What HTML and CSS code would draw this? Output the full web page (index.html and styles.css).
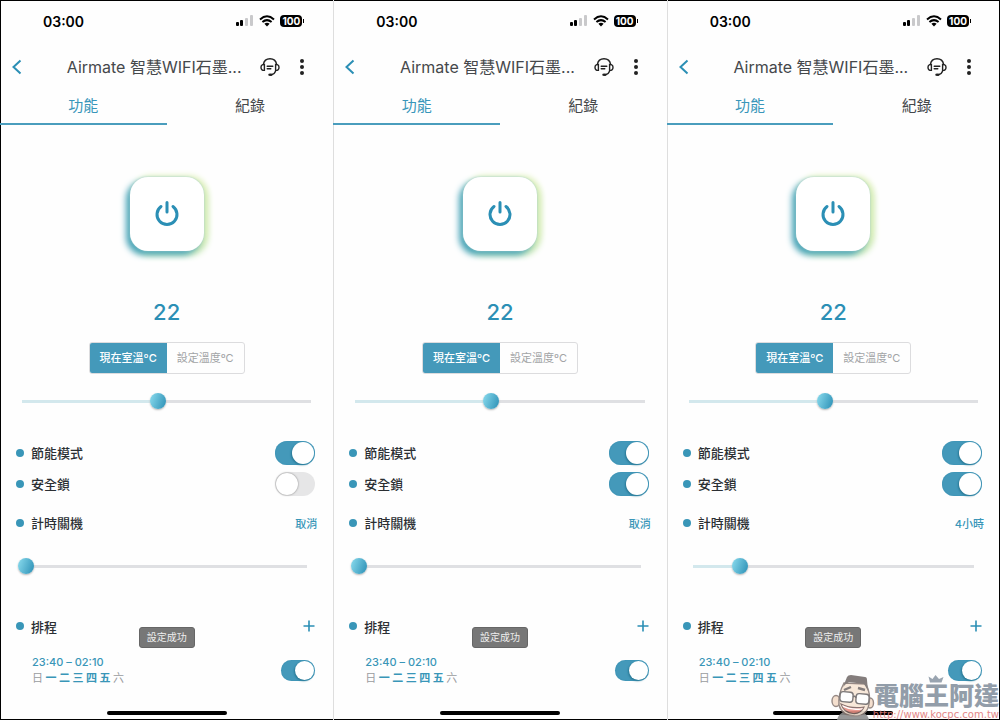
FILE: index.html
```html
<!DOCTYPE html>
<html lang="zh-Hant">
<head>
    <meta charset="UTF-8">
    <meta name="viewport" content="width=device-width, initial-scale=1.0">
    <title>Airmate 智慧WIFI石墨</title>
    <link rel="stylesheet" href="styles.css">
</head>
<body>
    <svg class="sprite" aria-hidden="true">
        <symbol id="signal" viewBox="0 0 18 12">
            <rect x="0" y="7" width="3" height="4" rx="1"/>
            <rect x="4" y="5" width="3" height="6" rx="1"/>
            <rect x="9" y="3" width="3" height="8" rx="1" fill="#c9c9cb"/>
            <rect x="14" y="0" width="3" height="11" rx="1" fill="#c9c9cb"/>
        </symbol>
        <symbol id="wifi" viewBox="0 0 16 12">
            <path d="M1 4.4 Q8 -1.8 15 4.4 M3.4 7 Q8 3.2 12.6 7" fill="none" stroke="#000" stroke-width="2"/>
            <path d="M5.4 8.7 Q8 6.7 10.6 8.7 L8 11.4 Z"/>
        </symbol>
        <symbol id="back" viewBox="0 0 12 16">
            <path d="M9.5 1.5 L2.5 8 L9.5 14.5" fill="none" stroke="#2b8fb5" stroke-width="2"/>
        </symbol>
        <symbol id="headset" viewBox="0 0 20 20">
            <g fill="none" stroke="#222" stroke-width="1.4" stroke-linecap="round">
                <path d="M3.3 7.5 C4 3.6 6.7 1.7 10 1.7 S16 3.6 16.7 7.5"/>
                <path d="M4.4 7.4 V13.4 C2.3 13.4 1 12.4 1 10.4 S2.3 7.4 4.4 7.4 Z M15.6 7.4 V13.4 C17.7 13.4 19 12.4 19 10.4 S17.7 7.4 15.6 7.4 Z"/>
                <path d="M15.8 13.6 C15 16 13.4 17.4 11.4 17.8"/>
                <path d="M7.2 9.2 H12.8 M7.2 11.8 H10.8"/>
            </g>
            <ellipse cx="10.4" cy="17.8" rx="2.2" ry="1.3" fill="#222"/>
        </symbol>
        <symbol id="dots" viewBox="0 0 6 18">
            <g fill="#222">
                <circle cx="3" cy="3" r="2"/>
                <circle cx="3" cy="9" r="2"/>
                <circle cx="3" cy="15" r="2"/>
            </g>
        </symbol>
        <symbol id="power" viewBox="0 0 26 28">
            <path d="M7 6.5 A10 10 0 1 0 19 6.5 M13 2.5 V12" fill="none" stroke="#2b8fb5" stroke-width="3" stroke-linecap="round"/>
        </symbol>
        <symbol id="plus" viewBox="0 0 12 12">
            <path d="M6 0.5 V11.5 M0.5 6 H11.5" stroke="#2b8fb5" stroke-width="1.6"/>
        </symbol>
    </svg>

    <main class="screens">
        <section class="phone">
            <div class="status">
                <span class="clock">03:00</span>
                <span class="status-icons">
                    <svg width="18" height="12"><use href="#signal"/></svg>
                    <svg width="16" height="12"><use href="#wifi"/></svg>
                    <span class="battery">100</span>
                </span>
            </div>
            <header class="topbar">
                <button class="icon-btn" aria-label="返回"><svg width="12" height="16"><use href="#back"/></svg></button>
                <h1 class="title">Airmate 智慧WIFI石墨...</h1>
                <button class="icon-btn" aria-label="客服"><svg width="20" height="20"><use href="#headset"/></svg></button>
                <button class="icon-btn more" aria-label="更多"><svg width="6" height="18"><use href="#dots"/></svg></button>
            </header>
            <nav class="tabs">
                <a class="tab active" href="#">功能</a>
                <a class="tab" href="#">紀錄</a>
            </nav>
            <button class="power-btn" aria-label="電源"><svg width="26" height="28"><use href="#power"/></svg></button>
            <p class="temp">22</p>
            <div class="segment">
                <button class="seg on">現在室溫ºC</button>
                <button class="seg">設定溫度ºC</button>
            </div>
            <input class="range temp-range" type="range" min="0" max="100" value="47" style="--fill: 47%" aria-label="溫度">
            <div class="row">
                <label class="name" for="eco-1">節能模式</label>
                <input class="switch" type="checkbox" id="eco-1" checked>
            </div>
            <div class="row">
                <label class="name" for="lock-1">安全鎖</label>
                <input class="switch" type="checkbox" id="lock-1">
            </div>
            <div class="row timer">
                <label class="name" for="timer-1">計時關機</label>
                <button class="text-btn">取消</button>
            </div>
            <input class="range timer-range" type="range" id="timer-1" min="0" max="24" value="0" style="--fill: 0%">
            <div class="row schedule">
                <h2 class="name">排程</h2>
                <button class="icon-btn" aria-label="新增排程"><svg width="12" height="12"><use href="#plus"/></svg></button>
            </div>
            <div class="plan">
                <label for="plan-1">
                    <span class="time">23:40 – 02:10</span>
                    <span class="days">日 <b>一 二 三 四 五</b> 六</span>
                </label>
                <input class="switch small" type="checkbox" id="plan-1" checked>
            </div>
            <div class="toast">設定成功</div>
            <div class="home-bar"></div>
        </section>

        <section class="phone">
            <div class="status">
                <span class="clock">03:00</span>
                <span class="status-icons">
                    <svg width="18" height="12"><use href="#signal"/></svg>
                    <svg width="16" height="12"><use href="#wifi"/></svg>
                    <span class="battery">100</span>
                </span>
            </div>
            <header class="topbar">
                <button class="icon-btn" aria-label="返回"><svg width="12" height="16"><use href="#back"/></svg></button>
                <h1 class="title">Airmate 智慧WIFI石墨...</h1>
                <button class="icon-btn" aria-label="客服"><svg width="20" height="20"><use href="#headset"/></svg></button>
                <button class="icon-btn more" aria-label="更多"><svg width="6" height="18"><use href="#dots"/></svg></button>
            </header>
            <nav class="tabs">
                <a class="tab active" href="#">功能</a>
                <a class="tab" href="#">紀錄</a>
            </nav>
            <button class="power-btn" aria-label="電源"><svg width="26" height="28"><use href="#power"/></svg></button>
            <p class="temp">22</p>
            <div class="segment">
                <button class="seg on">現在室溫ºC</button>
                <button class="seg">設定溫度ºC</button>
            </div>
            <input class="range temp-range" type="range" min="0" max="100" value="47" style="--fill: 47%" aria-label="溫度">
            <div class="row">
                <label class="name" for="eco-2">節能模式</label>
                <input class="switch" type="checkbox" id="eco-2" checked>
            </div>
            <div class="row">
                <label class="name" for="lock-2">安全鎖</label>
                <input class="switch" type="checkbox" id="lock-2" checked>
            </div>
            <div class="row timer">
                <label class="name" for="timer-2">計時關機</label>
                <button class="text-btn">取消</button>
            </div>
            <input class="range timer-range" type="range" id="timer-2" min="0" max="24" value="0" style="--fill: 0%">
            <div class="row schedule">
                <h2 class="name">排程</h2>
                <button class="icon-btn" aria-label="新增排程"><svg width="12" height="12"><use href="#plus"/></svg></button>
            </div>
            <div class="plan">
                <label for="plan-2">
                    <span class="time">23:40 – 02:10</span>
                    <span class="days">日 <b>一 二 三 四 五</b> 六</span>
                </label>
                <input class="switch small" type="checkbox" id="plan-2" checked>
            </div>
            <div class="toast">設定成功</div>
            <div class="home-bar"></div>
        </section>

        <section class="phone">
            <div class="status">
                <span class="clock">03:00</span>
                <span class="status-icons">
                    <svg width="18" height="12"><use href="#signal"/></svg>
                    <svg width="16" height="12"><use href="#wifi"/></svg>
                    <span class="battery">100</span>
                </span>
            </div>
            <header class="topbar">
                <button class="icon-btn" aria-label="返回"><svg width="12" height="16"><use href="#back"/></svg></button>
                <h1 class="title">Airmate 智慧WIFI石墨...</h1>
                <button class="icon-btn" aria-label="客服"><svg width="20" height="20"><use href="#headset"/></svg></button>
                <button class="icon-btn more" aria-label="更多"><svg width="6" height="18"><use href="#dots"/></svg></button>
            </header>
            <nav class="tabs">
                <a class="tab active" href="#">功能</a>
                <a class="tab" href="#">紀錄</a>
            </nav>
            <button class="power-btn" aria-label="電源"><svg width="26" height="28"><use href="#power"/></svg></button>
            <p class="temp">22</p>
            <div class="segment">
                <button class="seg on">現在室溫ºC</button>
                <button class="seg">設定溫度ºC</button>
            </div>
            <input class="range temp-range" type="range" min="0" max="100" value="47" style="--fill: 47%" aria-label="溫度">
            <div class="row">
                <label class="name" for="eco-3">節能模式</label>
                <input class="switch" type="checkbox" id="eco-3" checked>
            </div>
            <div class="row">
                <label class="name" for="lock-3">安全鎖</label>
                <input class="switch" type="checkbox" id="lock-3" checked>
            </div>
            <div class="row timer">
                <label class="name" for="timer-3">計時關機</label>
                <button class="text-btn">4小時</button>
            </div>
            <input class="range timer-range" type="range" id="timer-3" min="0" max="24" value="4" style="--fill: 17%">
            <div class="row schedule">
                <h2 class="name">排程</h2>
                <button class="icon-btn" aria-label="新增排程"><svg width="12" height="12"><use href="#plus"/></svg></button>
            </div>
            <div class="plan">
                <label for="plan-3">
                    <span class="time">23:40 – 02:10</span>
                    <span class="days">日 <b>一 二 三 四 五</b> 六</span>
                </label>
                <input class="switch small" type="checkbox" id="plan-3" checked>
            </div>
            <div class="toast">設定成功</div>
            <div class="home-bar"></div>
        </section>

        <div class="watermark">
            <svg class="mascot" width="48" height="46" viewBox="0 0 48 46">
                <path d="M6 46 Q7 40 13 38 L33 39 Q37 41 38 46 Z" fill="#8d8d8d"/>
                <ellipse cx="5" cy="27" rx="4" ry="5.5" fill="#f3dcc9" stroke="#8b7d78" stroke-width="1.4"/>
                <ellipse cx="39" cy="29" rx="3.5" ry="5" fill="#f3dcc9" stroke="#8b7d78" stroke-width="1.4"/>
                <path d="M13 9 Q7 20 8 31 Q11 42 24 42 Q36 42 38 30 Q40 20 35 10 Z" fill="#f8e6d6" stroke="#8b7d78" stroke-width="1.4"/>
                <path d="M12 13 L16 3 Q17 1 20 1 L34 3 Q36 3 36 6 L37 17 Q35 13 33 10 L18 8 Q14 10 12 13 Z" fill="#77706e"/>
                <path d="M13 16 L20 13 M27 14 L34 16" stroke="#77706e" stroke-width="2.4"/>
                <rect x="9" y="18" width="13" height="10" rx="3" fill="#fff" stroke="#6f6a6a" stroke-width="1.4" transform="rotate(5 16 23)"/>
                <rect x="25" y="20" width="13" height="10" rx="3" fill="#fff" stroke="#6f6a6a" stroke-width="1.4" transform="rotate(5 32 25)"/>
                <path d="M22 23 Q24 21 25 24" fill="none" stroke="#6f6a6a" stroke-width="1.4"/>
                <path d="M10 30 Q20 35 33 33 Q30 40 22 39.5 Q13 39 10 30 Z" fill="#e88f83" stroke="#7d6662" stroke-width="1.2"/>
                <path d="M11 31 Q21 36 32 34 L31 35.5 Q21 37.5 12 33 Z" fill="#fff"/>
            </svg>
            <svg class="crown" width="16" height="9" viewBox="0 0 16 9">
                <path d="M2 8.5 L0.5 2.5 L4.5 5 L7.5 1 L11 5 L15.5 3 L13.5 8.5 Z" fill="#8f9ba8"/>
            </svg>
            <div class="brand">
                <strong>電腦王阿達</strong>
                <a href="http://www.kocpc.com.tw">http://www.kocpc.com.tw</a>
            </div>
        </div>
    </main>
</body>
</html>
```
FILE: styles.css
```css
* {
    margin: 0;
    padding: 0;
    box-sizing: border-box;
}
body {
    background: #fefefe;
    color: #2b2f33;
    font-family: Inter, "Noto Sans CJK TC", sans-serif;
}
button {
    border: none;
    background: none;
    font-family: inherit;
    cursor: pointer;
}
svg {
    display: block;
}
.sprite {
    position: absolute;
    width: 0;
    height: 0;
}
.screens {
    position: relative;
    display: flex;
    min-height: 100vh;
    overflow: hidden;
    outline: 1px solid #000;
    outline-offset: -1px;
}
.phone {
    position: relative;
    flex: 1;
    display: flex;
    flex-direction: column;
    min-width: 0;
}
.phone + .phone {
    box-shadow: inset 1px 0 #dedede;
}

/* status bar */
.status {
    display: flex;
    justify-content: space-between;
    align-items: center;
    height: 42px;
    padding: 0 29px 0 43px;
}
.clock {
    color: #000;
    font-size: 14px;
    font-weight: 600;
}
.status-icons {
    display: flex;
    align-items: center;
    gap: 5px;
}
.battery {
    position: relative;
    width: 22px;
    height: 12px;
    margin-right: 2px;
    border-radius: 4px;
    background: #000;
    color: #fff;
    font-size: 10px;
    font-weight: 700;
    line-height: 12px;
    text-align: center;
}
.battery::after {
    content: '';
    position: absolute;
    top: 4px;
    right: -2px;
    width: 1px;
    height: 4px;
    background: #000;
}

/* header */
.topbar {
    display: flex;
    align-items: center;
    height: 50px;
    padding: 0 28px 0 11px;
}
.title {
    flex: 1;
    padding: 0 0 2px 25px;
    color: #45484b;
    font-size: 16px;
    font-weight: 400;
    text-align: center;
    white-space: nowrap;
}
.more {
    margin-left: 19px;
}
.tabs {
    display: flex;
}
.tab {
    flex: 1;
    height: 33px;
    border-bottom: 2px solid transparent;
    color: #45484b;
    font-size: 15px;
    line-height: 28px;
    text-align: center;
    text-decoration: none;
}
.tab.active {
    border-color: #4a9dbd;
    color: #3996ba;
}

/* power and temperature */
.power-btn {
    display: flex;
    justify-content: center;
    align-items: center;
    align-self: center;
    width: 74px;
    height: 74px;
    margin-top: 52px;
    border-radius: 18px;
    background: #fff;
    box-shadow: 0 0 2px #a9cfcc, -4px 4px 6px #4aa5ba, 3px -1px 6px #dff0b8, 3px 4px 7px #c3e6ac;
}
.temp {
    margin-top: 46px;
    color: #2b8fb5;
    font-size: 22px;
    font-weight: 500;
    line-height: 30px;
    text-align: center;
}
.segment {
    display: flex;
    align-self: center;
    width: 156px;
    height: 32px;
    margin-top: 15px;
    border: 1px solid #dcdcde;
    border-radius: 3px;
    overflow: hidden;
}
.seg {
    flex: 1;
    padding-bottom: 2px;
    color: #a2a4a6;
    font-size: 11px;
    white-space: nowrap;
}
.seg.on {
    background: #4499ba;
    color: #fff;
    font-weight: 500;
}

/* sliders */
.range {
    -webkit-appearance: none;
    appearance: none;
    height: 16px;
    background: linear-gradient(to right, #d3e8ed var(--fill), #dfe0e3 var(--fill)) center / calc(100% - 16px) 3px no-repeat;
}
.range::-webkit-slider-thumb {
    -webkit-appearance: none;
    width: 16px;
    height: 16px;
    border-radius: 50%;
    background: linear-gradient(110deg, #8bdcee, #2b8fb5);
    box-shadow: 0 1px 2px #b5b5b5;
}
.temp-range {
    margin: 19px 14px 28px;
}
.timer-range {
    margin: 20px 18px 28px;
}

/* settings */
.row {
    display: flex;
    justify-content: space-between;
    align-items: center;
    height: 31px;
    padding: 0 18px 0 16px;
}
.name {
    display: flex;
    align-items: center;
    gap: 7px;
    font-size: 13px;
    font-weight: 500;
}
.name::before {
    content: '';
    width: 8px;
    height: 8px;
    border-radius: 50%;
    background: #3996b8;
}
.timer {
    margin-top: 8px;
    padding-right: 16px;
}
.schedule {
    height: 48px;
}
.text-btn {
    color: #3996b8;
    font-size: 11px;
    font-weight: 500;
}
.switch {
    -webkit-appearance: none;
    appearance: none;
    display: flex;
    width: 40px;
    height: 24px;
    padding: 1px;
    border-radius: 12px;
    background: #e6e6e7;
    cursor: pointer;
}
.switch::before {
    content: '';
    height: 100%;
    aspect-ratio: 1;
    border-radius: 50%;
    background: #fff;
    box-shadow: 0 0 2px #777;
}
.switch:checked {
    justify-content: flex-end;
    background: #4499ba;
    box-shadow: inset 0 0 1px #1f7fa5;
}
.switch:checked::before {
    box-shadow: -1px 1px 2px #287895;
}
.switch.small {
    width: 34px;
    height: 21px;
}

/* schedule */
.plan {
    display: flex;
    justify-content: space-between;
    align-items: center;
    padding: 5px 18px 0 32px;
}
.time,
.days {
    display: block;
    font-size: 11px;
    line-height: 15px;
}
.time {
    color: #3996b8;
    font-weight: 500;
}
.days {
    color: #9a9c9e;
    font-family: "Noto Sans CJK TC", sans-serif;
}
.days b {
    color: #3996b8;
    font-weight: 700;
}
.toast {
    position: absolute;
    top: 627px;
    left: 50%;
    transform: translateX(-50%);
    padding: 0 7px;
    border: 1px solid #666;
    border-radius: 3px;
    background: #777;
    color: #eee;
    font-size: 10px;
    line-height: 19px;
    white-space: nowrap;
}
.home-bar {
    align-self: center;
    width: 120px;
    height: 4px;
    margin-top: auto;
    margin-bottom: 5px;
    border-radius: 2px;
    background: #000;
}

/* watermark */
.watermark {
    position: absolute;
    right: 1px;
    bottom: 0;
    display: flex;
    align-items: flex-end;
    opacity: 0.9;
}
.mascot {
    margin-right: -6px;
}
.crown {
    position: absolute;
    top: 0;
    right: 55px;
}
.brand {
    text-align: right;
}
.brand strong {
    display: block;
    color: #8793a0;
    font-size: 25px;
    font-weight: 900;
    line-height: 26px;
}
.brand a {
    display: block;
    color: #e07a7a;
    font-family: "DejaVu Sans", sans-serif;
    font-size: 10px;
    line-height: 11px;
    text-decoration: none;
}
```
